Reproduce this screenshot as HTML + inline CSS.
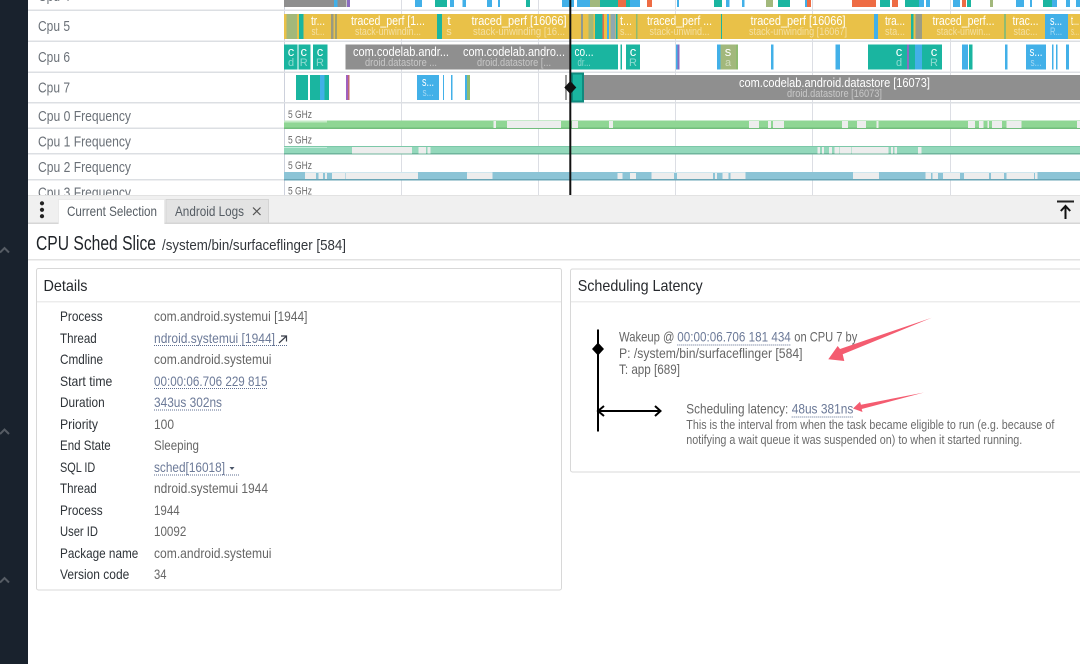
<!DOCTYPE html>
<html>
<head>
<meta charset="utf-8">
<title>CPU Sched Slice</title>
<style>
html,body{margin:0;padding:0;background:#fff;width:1080px;height:664px;overflow:hidden}
svg{display:block;font-family:"Liberation Sans",sans-serif}
.l{fill:#6b7178;font-size:15px}
.m{fill:#fff;font-size:13px;text-anchor:middle}
.s{fill:rgba(255,255,255,.5);font-size:11px;text-anchor:middle}
.g{fill:#6a6a6a;font-size:11px}
.k{fill:#2e3338;font-size:14px}
.v{fill:#666;font-size:14px}
.a{fill:#6c7a98;font-size:14px}
.u{stroke:#5c6c90;stroke-width:1;stroke-dasharray:1 1;fill:none}
</style>
</head>
<body>
<svg width="1080" height="664" viewBox="0 0 1080 664" xmlns="http://www.w3.org/2000/svg">
<rect width="1080" height="664" fill="#fff"/>

<!-- grid -->
<g fill="#dcdee4">
<rect x="284" y="0" width="1" height="196" fill="#cdd1dc"/>
<rect x="401" y="0" width="1" height="196"/>
<rect x="538" y="0" width="1" height="196"/>
<rect x="675" y="0" width="1" height="196"/>
<rect x="812" y="0" width="1" height="196"/>
<rect x="950" y="0" width="1" height="196"/>
</g>
<g fill="#dcdfe3">
<rect x="28" y="9.5" width="1052" height="1.5"/>
<rect x="28" y="40.5" width="1052" height="1.5"/>
<rect x="28" y="71.5" width="1052" height="1.5"/>
<rect x="28" y="102" width="1052" height="1.5"/>
<rect x="28" y="127.5" width="1052" height="1.5"/>
<rect x="28" y="153" width="1052" height="1.5"/>
<rect x="28" y="179" width="1052" height="1.5"/>
</g>

<!-- labels -->
<text class="l" x="38" y="1" textLength="32" lengthAdjust="spacingAndGlyphs">Cpu 4</text>
<text class="l" x="38" y="31" textLength="32" lengthAdjust="spacingAndGlyphs">Cpu 5</text>
<text class="l" x="38" y="62" textLength="32" lengthAdjust="spacingAndGlyphs">Cpu 6</text>
<text class="l" x="38" y="92.5" textLength="32" lengthAdjust="spacingAndGlyphs">Cpu 7</text>
<text class="l" x="38" y="121" textLength="93" lengthAdjust="spacingAndGlyphs">Cpu 0 Frequency</text>
<text class="l" x="38" y="146.5" textLength="93" lengthAdjust="spacingAndGlyphs">Cpu 1 Frequency</text>
<text class="l" x="38" y="172" textLength="93" lengthAdjust="spacingAndGlyphs">Cpu 2 Frequency</text>
<text class="l" x="38" y="197.5" textLength="93" lengthAdjust="spacingAndGlyphs">Cpu 3 Frequency</text>

<!-- top row (Cpu 4 tail) -->
<g>
<rect x="284" y="0" width="50" height="7" fill="#8f8f8f"/>
<rect x="334" y="0" width="3.5" height="7" fill="#42b0e8"/>
<rect x="337.5" y="0" width="9" height="7" fill="#8f8f8f"/>
<rect x="347" y="0" width="3" height="7" fill="#8a6cc0"/>
<g fill="#42b0e8">
<rect x="415" y="0" width="7" height="7"/><rect x="450" y="0" width="4" height="7"/><rect x="462.5" y="0" width="3.5" height="7"/><rect x="487" y="0" width="5" height="7"/><rect x="498" y="0" width="2" height="7"/>
<rect x="726" y="0" width="3.5" height="7"/><rect x="742" y="0" width="2.5" height="7"/><rect x="677" y="0" width="2" height="7"/><rect x="805" y="0" width="2" height="7"/>
<rect x="562" y="0" width="12" height="7"/><rect x="630" y="0" width="10" height="7"/><rect x="577" y="0" width="15" height="7"/>
<rect x="953" y="0" width="7" height="7"/><rect x="1017" y="0" width="7" height="7"/><rect x="1050" y="0" width="7" height="7"/><rect x="1016" y="0" width="2" height="7"/><rect x="1030" y="0" width="2" height="7"/><rect x="1066" y="0" width="4" height="7"/><rect x="1076" y="0" width="4" height="7"/>
<rect x="916" y="0" width="8" height="7"/><rect x="926" y="0" width="4" height="7"/>
</g>
<g fill="#1ab5a0">
<rect x="435" y="0" width="12" height="7"/><rect x="526" y="0" width="4" height="7"/><rect x="600" y="0" width="30" height="7"/><rect x="714" y="0" width="8" height="7"/><rect x="778" y="0" width="12" height="7"/><rect x="905" y="0" width="14" height="7"/><rect x="1043" y="0" width="9" height="7"/><rect x="967" y="0" width="4" height="7"/><rect x="880" y="0" width="10" height="7"/>
</g>
<g fill="#ee6c44">
<rect x="647" y="0" width="5" height="7"/><rect x="852" y="0" width="24" height="7"/><rect x="807" y="0" width="4" height="7"/><rect x="618" y="0" width="8" height="7"/><rect x="892" y="0" width="6" height="7"/><rect x="962" y="0" width="4" height="7"/>
</g>
<g fill="#a2b87c"><rect x="766" y="0" width="7" height="7"/><rect x="590" y="0" width="10" height="7"/><rect x="990" y="0" width="3" height="7"/></g>
</g>

<!-- Cpu 5 -->
<rect x="284" y="14" width="796" height="25" fill="#e9c148"/>
<rect x="286.5" y="14" width="10.5" height="25" fill="#a3b87a"/>
<rect x="299" y="14" width="4.5" height="25" fill="#1ab5a0"/>
<rect x="331" y="14" width="2.5" height="25" fill="#9a9a80"/>
<rect x="335" y="14" width="2" height="25" fill="#a0a070"/>
<rect x="437" y="14" width="5" height="25" fill="#1ab5a0"/>
<rect x="581" y="14" width="2" height="25" fill="#8f9a90"/>
<rect x="588.5" y="14" width="5" height="25" fill="#a3b87a"/>
<rect x="595" y="14" width="7.5" height="25" fill="#1ab5a0"/>
<rect x="602.5" y="14" width="1.5" height="25" fill="#ee6c44"/>
<rect x="607" y="14" width="2" height="25" fill="#42b0e8"/>
<rect x="610.5" y="14" width="5" height="25" fill="#8fa8b0"/>
<rect x="616" y="14" width="1.5" height="25" fill="#1ab5a0"/>
<rect x="636" y="14" width="1.5" height="25" fill="#8fbb70"/>
<rect x="721" y="14" width="1" height="25" fill="#1ab5a0"/>
<rect x="874" y="14" width="4" height="25" fill="#42b0e8"/>
<rect x="911" y="14" width="2.5" height="25" fill="#1ab5a0"/>
<rect x="915.5" y="14" width="6.5" height="25" fill="#9c9c86"/>
<rect x="1004" y="14" width="2" height="25" fill="#8fbb70"/>
<rect x="1045" y="14" width="23" height="25" fill="#42b0e8"/>
<text class="m" x="318" y="25" textLength="14" lengthAdjust="spacingAndGlyphs">tr...</text>
<text class="s" x="318" y="35" textLength="13" lengthAdjust="spacingAndGlyphs">st...</text>
<text class="m" x="388" y="25" textLength="74" lengthAdjust="spacingAndGlyphs">traced_perf [1...</text>
<text class="s" x="388" y="35" textLength="66" lengthAdjust="spacingAndGlyphs">stack-unwindin...</text>
<text class="m" x="449" y="25">t</text>
<text class="s" x="449" y="35">s</text>
<text class="m" x="519" y="25" textLength="95" lengthAdjust="spacingAndGlyphs">traced_perf [16066]</text>
<text class="s" x="519" y="35" textLength="92" lengthAdjust="spacingAndGlyphs">stack-unwinding [16...</text>
<text class="m" x="626" y="25" textLength="12" lengthAdjust="spacingAndGlyphs">t...</text>
<text class="s" x="626" y="35" textLength="12" lengthAdjust="spacingAndGlyphs">s...</text>
<text class="m" x="679.5" y="25" textLength="65" lengthAdjust="spacingAndGlyphs">traced_perf ...</text>
<text class="s" x="679.5" y="35" textLength="60" lengthAdjust="spacingAndGlyphs">stack-unwind...</text>
<text class="m" x="798" y="25" textLength="95" lengthAdjust="spacingAndGlyphs">traced_perf [16066]</text>
<text class="s" x="798" y="35" textLength="98" lengthAdjust="spacingAndGlyphs">stack-unwinding [16067]</text>
<text class="m" x="895" y="25" textLength="20" lengthAdjust="spacingAndGlyphs">tra...</text>
<text class="s" x="895" y="35" textLength="20" lengthAdjust="spacingAndGlyphs">sta...</text>
<text class="m" x="963.5" y="25" textLength="62" lengthAdjust="spacingAndGlyphs">traced_perf...</text>
<text class="s" x="963.5" y="35" textLength="54" lengthAdjust="spacingAndGlyphs">stack-unwin...</text>
<text class="m" x="1025.5" y="25" textLength="26" lengthAdjust="spacingAndGlyphs">trac...</text>
<text class="s" x="1025.5" y="35" textLength="24" lengthAdjust="spacingAndGlyphs">stac...</text>
<text class="m" x="1056" y="25" textLength="12" lengthAdjust="spacingAndGlyphs">s...</text>
<text class="s" x="1056" y="35" textLength="12" lengthAdjust="spacingAndGlyphs">R...</text>
<text class="m" x="1075" y="25" textLength="8" lengthAdjust="spacingAndGlyphs">t...</text>
<text class="s" x="1075" y="35" textLength="8" lengthAdjust="spacingAndGlyphs">s...</text>

<!-- Cpu 6 -->
<rect x="284" y="44.5" width="26.5" height="25" fill="#1ab5a0"/>
<rect x="313" y="44.5" width="14.5" height="25" fill="#1ab5a0"/>
<rect x="297.5" y="44.5" width="1" height="25" fill="#fff"/>
<rect x="345.5" y="44.5" width="225.5" height="25" fill="#8f8f8f"/>
<rect x="571" y="44.5" width="47" height="25" fill="#1ab5a0"/>
<rect x="620.5" y="44.5" width="1.5" height="25" fill="#1ab5a0"/>
<rect x="626" y="44.5" width="14" height="25" fill="#1ab5a0"/>
<rect x="676" y="44.5" width="1.5" height="25" fill="#42b0e8"/>
<rect x="677.5" y="44.5" width="2" height="25" fill="#8a6cc0"/>
<rect x="717" y="44.5" width="3.5" height="25" fill="#42b0e8"/>
<rect x="720.5" y="44.5" width="15.5" height="25" fill="#a2b87c"/>
<rect x="736" y="44.5" width="2" height="25" fill="#8fbb70"/>
<rect x="771" y="44.5" width="2.5" height="25" fill="#42b0e8"/>
<rect x="835.5" y="44.5" width="4.5" height="25" fill="#42b0e8"/>
<rect x="868" y="44.5" width="39" height="25" fill="#1ab5a0"/>
<rect x="907" y="44.5" width="2" height="25" fill="#8a6cc0"/>
<rect x="909" y="44.5" width="6" height="25" fill="#1ab5a0"/>
<rect x="915" y="44.5" width="7" height="25" fill="#42b0e8"/>
<rect x="922" y="44.5" width="20" height="25" fill="#1ab5a0"/>
<rect x="962" y="44.5" width="6" height="25" fill="#42b0e8"/>
<rect x="969" y="44.5" width="3.5" height="25" fill="#1ab5a0"/>
<rect x="1005" y="44.5" width="2.5" height="25" fill="#42b0e8"/>
<rect x="1026" y="44.5" width="20" height="25" fill="#42b0e8"/>
<rect x="1052" y="44.5" width="1.5" height="25" fill="#42b0e8"/>
<rect x="1056" y="44.5" width="1.5" height="25" fill="#42b0e8"/>
<rect x="1066" y="44.5" width="3" height="25" fill="#42b0e8"/>
<text class="m" x="291" y="56">c</text><text class="s" x="291" y="66">d</text>
<text class="m" x="303.7" y="56">c</text><text class="s" x="303.7" y="66">R</text>
<text class="m" x="320" y="56">c</text><text class="s" x="320" y="66">R</text>
<text class="m" x="401" y="56" textLength="96" lengthAdjust="spacingAndGlyphs">com.codelab.andr...</text>
<text class="s" x="401" y="66" textLength="72" lengthAdjust="spacingAndGlyphs">droid.datastore ...</text>
<text class="m" x="514" y="56" textLength="102" lengthAdjust="spacingAndGlyphs">com.codelab.andro...</text>
<text class="s" x="514" y="66" textLength="74" lengthAdjust="spacingAndGlyphs">droid.datastore [...</text>
<text class="m" x="584" y="56" textLength="19" lengthAdjust="spacingAndGlyphs">co...</text>
<text class="s" x="584" y="66" textLength="13" lengthAdjust="spacingAndGlyphs">dr...</text>
<text class="m" x="633" y="56">c</text><text class="s" x="633" y="66">R</text>
<text class="m" x="728" y="56">s</text><text class="s" x="728" y="66">a</text>
<text class="m" x="899" y="56">c</text><text class="s" x="899" y="66">d</text>
<text class="m" x="934" y="56">c</text><text class="s" x="934" y="66">R</text>
<text class="m" x="1036" y="56" textLength="13" lengthAdjust="spacingAndGlyphs">s...</text>
<text class="s" x="1036" y="66" textLength="11" lengthAdjust="spacingAndGlyphs">s...</text>

<!-- Cpu 7 -->
<rect x="296" y="75" width="12" height="25" fill="#1ab5a0"/>
<rect x="310" y="75" width="10" height="25" fill="#1ab5a0"/>
<rect x="320" y="75" width="4.5" height="25" fill="#42b0e8"/>
<rect x="324.5" y="75" width="4.5" height="25" fill="#1ab5a0"/>
<rect x="346" y="75" width="2" height="25" fill="#a060c0"/>
<rect x="348" y="75" width="1.5" height="25" fill="#c06a70"/>
<rect x="417" y="75" width="22" height="25" fill="#42b0e8"/>
<rect x="443" y="75" width="1" height="25" fill="#42b0e8"/>
<rect x="451" y="75" width="1.5" height="25" fill="#42b0e8"/>
<rect x="465" y="75" width="2" height="25" fill="#42b0e8"/>
<rect x="467" y="75" width="3" height="25" fill="#8fbb70"/>
<rect x="565" y="75" width="2" height="25" fill="#9a9a9a"/>
<rect x="584" y="75" width="496" height="25" fill="#8f8f8f"/>
<rect x="572" y="73.5" width="11" height="28" fill="#1ab5a0" stroke="#0f8a7e" stroke-width="2"/>
<text class="m" x="428" y="86" textLength="12" lengthAdjust="spacingAndGlyphs">s...</text>
<text class="s" x="428" y="96" textLength="11" lengthAdjust="spacingAndGlyphs">s...</text>
<text class="m" x="834.5" y="87" textLength="191" lengthAdjust="spacingAndGlyphs">com.codelab.android.datastore [16073]</text>
<text class="s" x="834.5" y="97" textLength="95" lengthAdjust="spacingAndGlyphs">droid.datastore [16073]</text>

<!-- Frequency labels -->
<text class="g" x="288" y="118" textLength="24" lengthAdjust="spacingAndGlyphs">5 GHz</text>
<text class="g" x="288" y="143.5" textLength="24" lengthAdjust="spacingAndGlyphs">5 GHz</text>
<text class="g" x="288" y="169" textLength="24" lengthAdjust="spacingAndGlyphs">5 GHz</text>
<text class="g" x="288" y="194.5" textLength="24" lengthAdjust="spacingAndGlyphs">5 GHz</text>

<!-- Cpu 0 freq -->
<rect x="284" y="120.5" width="796" height="8" fill="#8fd694"/>
<rect x="284" y="120.5" width="43" height="2" fill="#c4eac6"/>
<rect x="284" y="127.5" width="796" height="1.5" fill="#72bd7c"/>
<g fill="#ededed">
<rect x="493.5" y="121" width="2.5" height="7"/><rect x="507" y="121" width="54" height="7"/><rect x="572" y="121" width="6" height="7"/><rect x="609" y="121" width="4" height="7"/><rect x="749" y="121" width="10" height="7"/><rect x="768" y="121" width="3" height="7"/><rect x="773" y="121" width="11" height="7"/><rect x="842" y="121" width="6" height="7"/><rect x="857" y="121" width="9" height="7"/><rect x="876.5" y="121" width="2" height="7"/><rect x="968" y="121" width="7" height="7"/><rect x="979" y="121" width="4.5" height="7"/><rect x="987.5" y="121" width="1.5" height="7"/><rect x="992" y="121" width="10" height="7"/><rect x="1006.5" y="121" width="15" height="7"/><rect x="1077" y="121" width="3" height="7"/>
</g>

<!-- Cpu 1 freq -->
<rect x="284" y="146" width="796" height="8" fill="#93d8bb"/>
<rect x="284" y="146" width="43" height="2" fill="#c4ecdc"/>
<rect x="284" y="146" width="796" height="1" fill="#7cc8a8"/>
<rect x="284" y="153" width="796" height="1.5" fill="#6fb59c"/>
<g fill="#ededed">
<rect x="352" y="147" width="60" height="6.5"/><rect x="418.5" y="147" width="7.5" height="6.5"/><rect x="427.5" y="147" width="3" height="6.5"/><rect x="817.5" y="147" width="2.5" height="6.5"/><rect x="822" y="147" width="2" height="6.5"/><rect x="829" y="147" width="3" height="6.5"/><rect x="834.5" y="147" width="4.5" height="6.5"/><rect x="839.5" y="147" width="11.5" height="6.5"/><rect x="851.5" y="147" width="37" height="6.5"/><rect x="891" y="147" width="2" height="6.5"/><rect x="894.5" y="147" width="2.5" height="6.5"/><rect x="918" y="147" width="3.5" height="6.5"/>
</g>

<!-- Cpu 2 freq -->
<rect x="284" y="172" width="796" height="8" fill="#8cc4d6"/>
<rect x="284" y="179" width="796" height="1.5" fill="#69a5b6"/>
<g fill="#ededed">
<rect x="305" y="173" width="11" height="6"/><rect x="318.5" y="173" width="4.5" height="6"/><rect x="325" y="173" width="2" height="6"/><rect x="332" y="173" width="13.5" height="6"/><rect x="346" y="173" width="72" height="6"/><rect x="467" y="173" width="25.5" height="6"/><rect x="617.5" y="173" width="5" height="6"/><rect x="630" y="173" width="6" height="6"/><rect x="651.5" y="173" width="22.5" height="6"/><rect x="677" y="173" width="36" height="6"/><rect x="715" y="173" width="2" height="6"/><rect x="722.5" y="173" width="6" height="6"/><rect x="730.5" y="173" width="15" height="6"/><rect x="853" y="173" width="26" height="6"/><rect x="925.5" y="173" width="5.5" height="6"/><rect x="932.5" y="173" width="5.5" height="6"/><rect x="943" y="173" width="17" height="6"/><rect x="964" y="173" width="25" height="6"/><rect x="991" y="173" width="13" height="6"/><rect x="1006.5" y="173" width="27.5" height="6"/><rect x="1035" y="173" width="2.5" height="6"/>
</g>
<g fill="#cfe6ee">
<rect x="305" y="172" width="113" height="1"/><rect x="651.5" y="172" width="94" height="1"/><rect x="925.5" y="172" width="112" height="1"/><rect x="467" y="172" width="25.5" height="1"/><rect x="853" y="172" width="26" height="1"/>
</g>

<!-- cursor -->
<rect x="569.3" y="0" width="2" height="195" fill="#111"/>
<path d="M570.3 81 L576.3 87.5 L570.3 94 L564.3 87.5 Z" fill="#111"/>

<!-- tab bar -->
<rect x="28" y="195" width="1052" height="29" fill="#f0f0f0"/>
<rect x="28" y="195" width="1052" height="1" fill="#e2e2e2"/>
<rect x="28" y="222.5" width="1052" height="1.5" fill="#d6d6d6"/>
<circle cx="42" cy="203.3" r="2.1" fill="#222"/>
<circle cx="42" cy="209.8" r="2.1" fill="#222"/>
<circle cx="42" cy="216.2" r="2.1" fill="#222"/>
<rect x="166" y="199.5" width="102.5" height="23.5" fill="#e3e3e3" stroke="#d4d4d4" stroke-width="1"/>
<rect x="58.5" y="199.5" width="106" height="25" fill="#fff" stroke="#e2e2e2" stroke-width=".6"/>
<rect x="59" y="222" width="105" height="3" fill="#fff"/>
<text x="67" y="216" fill="#555c63" font-size="14" textLength="90" lengthAdjust="spacingAndGlyphs">Current Selection</text>
<text x="175" y="216" fill="#555c63" font-size="14" textLength="69" lengthAdjust="spacingAndGlyphs">Android Logs</text>
<path d="M253 207.5 L260.5 215 M260.5 207.5 L253 215" stroke="#555" stroke-width="1.2" fill="none"/>
<rect x="1057" y="200.5" width="17" height="2" fill="#222"/>
<path d="M1065.5 219 V206 M1060.8 211 L1065.5 206 L1070.2 211" stroke="#111" stroke-width="2" fill="none"/>

<!-- title -->
<rect x="28" y="224" width="1052" height="35" fill="#fff"/>
<rect x="28" y="259" width="1052" height="1.5" fill="#e2e2e2"/>
<text x="36" y="250" fill="#1f2328" font-size="20" textLength="120" lengthAdjust="spacingAndGlyphs">CPU Sched Slice</text>
<text x="162" y="250" fill="#33373c" font-size="15" textLength="184" lengthAdjust="spacingAndGlyphs">/system/bin/surfaceflinger [584]</text>

<!-- details card -->
<rect x="36.5" y="268.5" width="525" height="321.5" rx="2" fill="#fff" stroke="#d8d8d8"/>
<rect x="37" y="301" width="524" height="1.5" fill="#ececec"/>
<text x="43.5" y="291" fill="#26292d" font-size="16" textLength="44" lengthAdjust="spacingAndGlyphs">Details</text>

<text class="k" x="60" y="321" textLength="42.7" lengthAdjust="spacingAndGlyphs">Process</text>
<text class="k" x="60" y="343" textLength="36.7" lengthAdjust="spacingAndGlyphs">Thread</text>
<text class="k" x="60" y="364" textLength="43" lengthAdjust="spacingAndGlyphs">Cmdline</text>
<text class="k" x="60" y="386" textLength="52.3" lengthAdjust="spacingAndGlyphs">Start time</text>
<text class="k" x="60" y="407" textLength="44.7" lengthAdjust="spacingAndGlyphs">Duration</text>
<text class="k" x="60" y="429" textLength="38" lengthAdjust="spacingAndGlyphs">Priority</text>
<text class="k" x="60" y="450" textLength="50.7" lengthAdjust="spacingAndGlyphs">End State</text>
<text class="k" x="60" y="472" textLength="35.3" lengthAdjust="spacingAndGlyphs">SQL ID</text>
<text class="k" x="60" y="493" textLength="36.7" lengthAdjust="spacingAndGlyphs">Thread</text>
<text class="k" x="60" y="515" textLength="42.7" lengthAdjust="spacingAndGlyphs">Process</text>
<text class="k" x="60" y="536" textLength="38" lengthAdjust="spacingAndGlyphs">User ID</text>
<text class="k" x="60" y="558" textLength="78.3" lengthAdjust="spacingAndGlyphs">Package name</text>
<text class="k" x="60" y="579" textLength="69.3" lengthAdjust="spacingAndGlyphs">Version code</text>

<text class="v" x="154" y="321" textLength="153.5" lengthAdjust="spacingAndGlyphs">com.android.systemui [1944]</text>
<text class="a" x="154" y="343" textLength="121" lengthAdjust="spacingAndGlyphs">ndroid.systemui [1944]</text>
<path class="u" d="M154 345.5 H288"/>
<path d="M279 343 L286 336.5 M281 336 H286.5 V341.5" stroke="#3a3f4a" stroke-width="1.2" fill="none"/>
<text class="v" x="154" y="364" textLength="117.5" lengthAdjust="spacingAndGlyphs">com.android.systemui</text>
<text class="a" x="154" y="386" textLength="113.5" lengthAdjust="spacingAndGlyphs">00:00:06.706 229 815</text>
<path class="u" d="M154 388.5 H268"/>
<text class="a" x="154" y="407" textLength="68" lengthAdjust="spacingAndGlyphs">343us 302ns</text>
<path class="u" d="M154 410 H222"/>
<text class="v" x="154" y="429" textLength="20" lengthAdjust="spacingAndGlyphs">100</text>
<text class="v" x="154" y="450" textLength="45" lengthAdjust="spacingAndGlyphs">Sleeping</text>
<text class="a" x="154" y="472" textLength="71" lengthAdjust="spacingAndGlyphs">sched[16018]</text>
<path d="M229.5 467 H234.5 L232 470 Z" fill="#4a5568"/>
<path class="u" d="M154 475 H239"/>
<text class="v" x="154" y="493" textLength="114" lengthAdjust="spacingAndGlyphs">ndroid.systemui 1944</text>
<text class="v" x="154" y="515" textLength="25.7" lengthAdjust="spacingAndGlyphs">1944</text>
<text class="v" x="154" y="536" textLength="32.3" lengthAdjust="spacingAndGlyphs">10092</text>
<text class="v" x="154" y="558" textLength="117.5" lengthAdjust="spacingAndGlyphs">com.android.systemui</text>
<text class="v" x="154" y="579" textLength="12.5" lengthAdjust="spacingAndGlyphs">34</text>

<!-- scheduling latency card -->
<rect x="570.5" y="269" width="530" height="203" rx="2" fill="#fff" stroke="#d8d8d8"/>
<rect x="571" y="301" width="509" height="1.5" fill="#ececec"/>
<text x="577.7" y="291" fill="#26292d" font-size="16" textLength="125" lengthAdjust="spacingAndGlyphs">Scheduling Latency</text>

<rect x="597" y="329.5" width="2" height="102" fill="#000"/>
<path d="M598 342.5 L604 349 L598 355.5 L592 349 Z" fill="#000"/>
<path d="M598 411 H660 M604 406 L598 411 L604 416 M655 406 L660.5 411 L655 416" stroke="#000" stroke-width="2" fill="none"/>

<text class="v" x="619" y="341.5" textLength="55.5" lengthAdjust="spacingAndGlyphs">Wakeup @</text>
<text class="a" x="677.3" y="341.5" textLength="113.5" lengthAdjust="spacingAndGlyphs">00:00:06.706 181 434</text>
<path class="u" d="M677.3 345 H791"/>
<text class="v" x="794.3" y="341.5" textLength="63" lengthAdjust="spacingAndGlyphs">on CPU 7 by</text>
<text class="v" x="619" y="358" textLength="183.5" lengthAdjust="spacingAndGlyphs">P: /system/bin/surfaceflinger [584]</text>
<text class="v" x="619" y="374" textLength="61" lengthAdjust="spacingAndGlyphs">T: app [689]</text>
<text class="v" x="686.3" y="413.5" textLength="102" lengthAdjust="spacingAndGlyphs">Scheduling latency:</text>
<text class="a" x="791.7" y="413.5" textLength="61.6" lengthAdjust="spacingAndGlyphs">48us 381ns</text>
<path class="u" d="M791.7 417 H853.5"/>
<text x="686.3" y="429" fill="#6b6b6b" font-size="13" textLength="368" lengthAdjust="spacingAndGlyphs">This is the interval from when the task became eligible to run (e.g. because of</text>
<text x="686.3" y="444" fill="#6b6b6b" font-size="13" textLength="336" lengthAdjust="spacingAndGlyphs">notifying a wait queue it was suspended on) to when it started running.</text>

<!-- red arrows -->
<path d="M931.7 317.7 L842.7 354.3 L844.3 361 L828.3 359.3 L837.7 346 L840 349 Z" fill="#f45c70"/>
<path d="M924 392.5 L861 404.7 L860 401.7 L853 408.5 L862.5 412 L861.7 409 Z" fill="#f45c70"/>

<!-- sidebar -->
<rect x="0" y="0" width="28" height="664" fill="#19222d"/>
<g stroke="#565c64" stroke-width="2" fill="none">
<path d="M0 252.5 L4.5 248 L9 252.5"/>
<path d="M0 434 L4.5 429.5 L9 434"/>
<path d="M0 582.5 L4.5 578 L9 582.5"/>
</g>
</svg>
</body>
</html>
